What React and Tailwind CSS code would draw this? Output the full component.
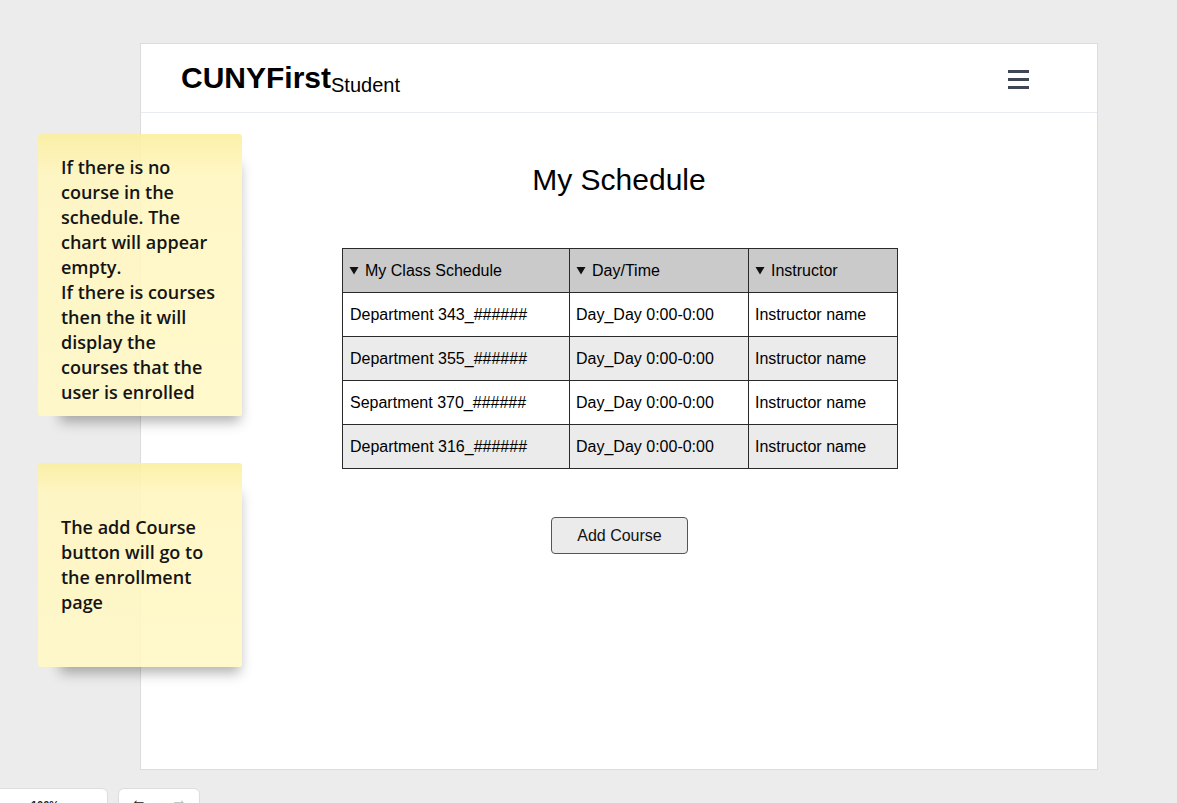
import React from "react";

const rows = [
  { course: "Department 343_######", time: "Day_Day 0:00-0:00", instructor: "Instructor name" },
  { course: "Department 355_######", time: "Day_Day 0:00-0:00", instructor: "Instructor name" },
  { course: "Separtment 370_######", time: "Day_Day 0:00-0:00", instructor: "Instructor name" },
  { course: "Department 316_######", time: "Day_Day 0:00-0:00", instructor: "Instructor name" },
];

const Caret = () => (
  <svg width="10" height="9" viewBox="0 0 10 9" className="inline-block mr-[6px] align-[1px]">
    <path d="M0.5 1 L9.5 1 L5 8.5 Z" fill="#111" />
  </svg>
);

const StickyNote = ({ className, children }) => (
  <div
    className={
      "absolute left-[38px] w-[204px] flex items-center pl-[23px] pr-[20px] rounded-[3px] bg-linear-to-b from-[#fcef9ee6] via-[#fff6c0e6] via-15% to-[#fff8c6e6] shadow-[10px_18px_12px_-12px_rgba(0,0,0,0.3)] " +
      className
    }
  >
    <p className="font-['Open_Sans',sans-serif] font-semibold text-[18px] leading-[25px] text-[#141414]">
      {children}
    </p>
  </div>
);

const App = () => {
  return (
    <div className="relative h-[803px] overflow-hidden bg-[#ececec] pt-[43px] pl-[140px] font-['Liberation_Sans',Arial,sans-serif]">
      {/* Wireframe frame */}
      <div className="w-[958px] h-[727px] bg-white border border-[#dcdcdc]">
        <header className="h-[69px] flex items-center justify-between pl-[40px] pr-[67px] border-b border-[#e8ebf0]">
          <h1 className="text-[30px] font-bold text-black leading-none pt-[2px]">
            CUNYFirst
            <span className="text-[20px] font-normal align-[-4px]">Student</span>
          </h1>
          <div className="flex flex-col gap-[5px] w-[21px] mt-[2px] mr-[1px]">
            <div className="h-[3px] bg-[#3f4654]" />
            <div className="h-[3px] bg-[#3f4654]" />
            <div className="h-[3px] bg-[#3f4654]" />
          </div>
        </header>

        <main className="flex flex-col items-center pt-[49px]">
          <h2 className="text-[30px] leading-[36px] text-black">My Schedule</h2>

          <table className="mt-[50px] ml-[2px] w-[555px] border-collapse text-[16px] text-black table-fixed">
            <colgroup>
              <col className="w-[227px]" />
              <col className="w-[179px]" />
              <col className="w-[149px]" />
            </colgroup>
            <thead>
              <tr className="h-[44px] bg-[#cacaca]">
                <th className="border border-[#2a2a2a] text-left font-normal pl-[6px]">
                  <Caret />My Class Schedule
                </th>
                <th className="border border-[#2a2a2a] text-left font-normal pl-[6px]">
                  <Caret />Day/Time
                </th>
                <th className="border border-[#2a2a2a] text-left font-normal pl-[6px]">
                  <Caret />Instructor
                </th>
              </tr>
            </thead>
            <tbody>
              {rows.map((r, i) => (
                <tr key={i} className={"h-[44px] " + (i % 2 === 1 ? "bg-[#ebebeb]" : "bg-white")}>
                  <td className="border border-[#2a2a2a] pl-[7px]">{r.course}</td>
                  <td className="border border-[#2a2a2a] pl-[6px]">{r.time}</td>
                  <td className="border border-[#2a2a2a] pl-[6px]">{r.instructor}</td>
                </tr>
              ))}
            </tbody>
          </table>

          <button className="mt-[48px] w-[137px] h-[37px] ml-[1px] rounded-[4px] border border-[#555] bg-[#ebebeb] text-[16px] text-[#111]">
            Add Course
          </button>
        </main>
      </div>

      {/* Sticky notes */}
      <StickyNote className="top-[134px] h-[282px] pt-[9px]">
        If there is no course in the schedule. The chart will appear empty.
        <br />
        If there is courses then the it will display the courses that the user is enrolled
      </StickyNote>
      <StickyNote className="top-[463px] h-[204px]">
        The add Course button will go to the enrollment page
      </StickyNote>

      {/* Bottom toolbar (cut off) */}
      <div className="absolute left-[-10px] top-[788px] w-[118px] h-[30px] bg-white border border-[#dddddd] rounded-[6px] pl-[40px] pt-[8px] text-[11px] font-bold text-[#222]">
        100%
      </div>
      <div className="absolute left-[118px] top-[788px] w-[82px] h-[30px] bg-white border border-[#dddddd] rounded-[6px] flex gap-[24px] pl-[12px] pt-[3px] text-[16px] leading-none">
        <span className="text-[#222]">←</span>
        <span className="text-[#bbb]">→</span>
      </div>
    </div>
  );
};

export default App;
